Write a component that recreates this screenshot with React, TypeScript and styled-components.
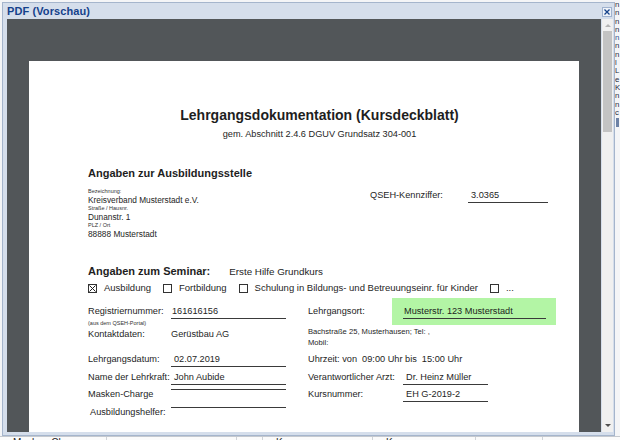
import React from 'react';
import styled, { createGlobalStyle } from 'styled-components';

const GlobalStyle = createGlobalStyle`
    html, body {
        margin: 0;
        padding: 0;
    }
    body {
        background: #f4f5f7;
        font-family: "Liberation Sans", Arial, sans-serif;
        color: #1e1e1e;
    }
`;

const Screen = styled.div`
    position: relative;
    width: 620px;
    height: 440px;
    overflow: hidden;
    background: #f4f5f7;
`;

/* the application that lies behind the dialog */
const Backdrop = styled.div`
    display: grid;
    grid-template-columns: 615px 1fr;
    grid-template-rows: 436px 1fr;
    height: 100%;
`;

const SideList = styled.div`
    grid-column: 2;
    grid-row: 1;
    padding-top: 1px;
    font-size: 7.8px;
    line-height: 8.3px;
    color: #1f2a3a;
    white-space: nowrap;
    overflow: hidden;
    div:nth-child(5) {
        color: #2c4f86;
    }
`;

const SideBar = styled.div`
    width: 3px;
    height: 9px;
    margin: 1px 0 0 1px;
    background: #6d82a6;
`;

const BottomRow = styled.div`
    grid-column: 1 / 3;
    grid-row: 2;
    display: flex;
    background: #fbfbfb;
    border-top: 1px solid #c5c9cf;
`;

const BottomCell = styled.div<{ $w: number }>`
    width: ${(p) => p.$w}px;
    flex: none;
    border-right: 1px solid #cfd3d8;
    padding: 1px 0 0 13px;
    box-sizing: border-box;
    font-size: 10px;
    line-height: 10px;
    white-space: nowrap;
`;

/* dialog window */
const Window = styled.section`
    position: absolute;
    left: 2px;
    top: 2px;
    width: 613px;
    height: 434px;
    box-sizing: border-box;
    display: flex;
    flex-direction: column;
    background: #d5deeb;
    border: 1px solid #a5b5cc;
    padding: 0 1px 3px 4px;
`;

const TitleBar = styled.header`
    height: 16px;
    flex: none;
    display: flex;
    align-items: center;
    justify-content: space-between;
`;

const Title = styled.h1`
    margin: 0;
    font-size: 11px;
    font-weight: bold;
    color: #15428b;
    letter-spacing: 0.1px;
`;

const CloseButton = styled.button`
    width: 10px;
    height: 10px;
    padding: 0;
    margin: 2px 1px 0 0;
    border: 1px solid #9fb2cf;
    background: #eef2f8;
    display: flex;
    align-items: center;
    justify-content: center;
`;

const Body = styled.div`
    flex: 1;
    display: flex;
    min-height: 0;
`;

const Viewer = styled.div`
    flex: 1;
    background: #525659;
    overflow: hidden;
    padding: 42px 22px 0;
`;

const ScrollTrack = styled.div`
    width: 11px;
    flex: none;
    margin-left: 1px;
    background: #f0f0f0;
    display: flex;
    flex-direction: column;
    align-items: center;
    padding: 5px 0;
    box-sizing: border-box;
`;

const ScrollArrow = styled.div<{ $down?: boolean }>`
    width: 0;
    height: 0;
    border-left: 3px solid transparent;
    border-right: 3px solid transparent;
    ${(p) => (p.$down ? 'border-top: 3px solid #505050; margin-top: auto;' : 'border-bottom: 3px solid #b4b4b4;')}
`;

const ScrollThumb = styled.div`
    width: 9px;
    height: 101px;
    margin-top: 4px;
    background: #c3c3c3;
`;

/* pdf page */
const Page = styled.article`
    background: #ffffff;
    min-height: 420px;
    padding: 46px 28px 0 59px;
    font-size: 9.2px;
    line-height: 12px;
    color: #1e1e1e;
`;

const DocTitle = styled.h2`
    margin: 0;
    text-align: center;
    font-size: 14px;
    line-height: 16px;
    font-weight: bold;
`;

const DocSubtitle = styled.p`
    margin: 5px 0 0;
    text-align: center;
    font-size: 9.2px;
    line-height: 12px;
`;

const SectionHeading = styled.h3<{ $mt: number }>`
    margin: ${(p) => p.$mt}px 0 0;
    font-size: 11px;
    line-height: 14px;
    font-weight: bold;
    display: flex;
    align-items: baseline;
    gap: 19px;
    span {
        font-weight: normal;
        font-size: 9.8px;
    }
`;

const StelleBlock = styled.div`
    display: flex;
    align-items: flex-start;
    margin-top: 8px;
`;

const AddressColumn = styled.div`
    width: 282px;
    display: flex;
    flex-direction: column;
`;

const TinyLabel = styled.div`
    font-size: 5.5px;
    line-height: 7px;
    color: #333;
`;

const AddressLine = styled.div`
    font-size: 8.3px;
    line-height: 10px;
`;

const KennRow = styled.div`
    display: flex;
    align-items: flex-start;
    margin-top: 1px;
    font-size: 9.2px;
`;

const CheckRow = styled.div`
    display: flex;
    align-items: center;
    margin-top: 3px;
    white-space: nowrap;
    font-size: 9.5px;
`;

const CheckItem = styled.label`
    display: flex;
    align-items: center;
    gap: 7px;
    margin-right: 12px;
`;

const Box = styled.span`
    width: 9px;
    height: 9px;
    box-sizing: border-box;
    border: 1px solid #333;
    display: inline-flex;
    align-items: center;
    justify-content: center;
`;

const FormRow = styled.div<{ $mt: number }>`
    display: flex;
    align-items: flex-start;
    margin-top: ${(p) => p.$mt}px;
    white-space: nowrap;
`;

const Label = styled.div<{ $w?: number; $indent?: number }>`
    width: ${(p) => p.$w ?? 83}px;
    flex: none;
    padding-left: ${(p) => p.$indent ?? 0}px;
    box-sizing: border-box;
`;

const RightLabel = styled(Label)`
    margin-left: 22px;
`;

const Value = styled.div<{ $w: number; $line?: boolean; $pad?: number }>`
    width: ${(p) => p.$w}px;
    flex: none;
    box-sizing: border-box;
    padding: 0 0 1px ${(p) => p.$pad ?? 3}px;
    border-bottom: 1px solid ${(p) => (p.$line ? '#3a3a3a' : 'transparent')};
`;

const Highlight = styled.div`
    background: #b3f5a5;
    margin: -7px -10px -6px -11px;
    padding: 7px 10px 6px 11px;
`;

const PortalNote = styled.div`
    font-size: 5.5px;
    line-height: 7px;
    color: #333;
    margin-top: 0.5px;
`;

const ContactText = styled.div`
    margin-left: 22px;
    font-size: 7.6px;
    line-height: 11px;
    margin-top: -1.5px;
`;

const TimeText = styled.div`
    margin-left: 22px;
`;

const CheckMark = () => (
    <svg width="7" height="7" viewBox="0 0 7 7">
        <path d="M0.5 0.5 L6.5 6.5 M6.5 0.5 L0.5 6.5" stroke="#222" strokeWidth="1" />
    </svg>
);

const sideLetters = ['n', 'n', 'n', 'n', 'n', 'n', 'n', 'l', 'L', 'e', 'K', 'n', 'n', 'c'];

const App: React.FC = () => {
    return (
        <Screen>
            <GlobalStyle />
            <Backdrop>
                <SideList>
                    {sideLetters.map((w, i) => (
                        <div key={i}>{w}</div>
                    ))}
                    <SideBar />
                </SideList>
                <BottomRow>
                    <BottomCell $w={107}>Masken-Charge</BottomCell>
                    <BottomCell $w={130} />
                    <BottomCell $w={26} />
                    <BottomCell $w={110}>Kursnummer</BottomCell>
                    <BottomCell $w={103}>Kurs</BottomCell>
                    <BottomCell $w={67} />
                </BottomRow>
            </Backdrop>

            <Window>
                <TitleBar>
                    <Title>PDF (Vorschau)</Title>
                    <CloseButton aria-label="Schließen">
                        <svg width="6" height="6" viewBox="0 0 6 6">
                            <path d="M0.5 0.5 L5.5 5.5 M5.5 0.5 L0.5 5.5" stroke="#15428b" strokeWidth="1.3" />
                        </svg>
                    </CloseButton>
                </TitleBar>
                <Body>
                    <Viewer>
                        <Page>
                            <DocTitle>Lehrgangsdokumentation (Kursdeckblatt)</DocTitle>
                            <DocSubtitle>gem. Abschnitt 2.4.6 DGUV Grundsatz 304-001</DocSubtitle>

                            <SectionHeading $mt={26}>Angaben zur Ausbildungsstelle</SectionHeading>
                            <StelleBlock>
                                <AddressColumn>
                                    <TinyLabel>Bezeichnung:</TinyLabel>
                                    <AddressLine>Kreisverband Musterstadt e.V.</AddressLine>
                                    <TinyLabel>Straße / Hausnr.</TinyLabel>
                                    <AddressLine>Dunanstr. 1</AddressLine>
                                    <TinyLabel>PLZ / Ort</TinyLabel>
                                    <AddressLine>88888 Musterstadt</AddressLine>
                                </AddressColumn>
                                <KennRow>
                                    <Label $w={98}>QSEH-Kennziffer:</Label>
                                    <Value $w={80} $line>
                                        3.0365
                                    </Value>
                                </KennRow>
                            </StelleBlock>

                            <SectionHeading $mt={25}>
                                Angaben zum Seminar:
                                <span>Erste Hilfe Grundkurs</span>
                            </SectionHeading>
                            <CheckRow>
                                <CheckItem>
                                    <Box>
                                        <CheckMark />
                                    </Box>
                                    Ausbildung
                                </CheckItem>
                                <CheckItem>
                                    <Box />
                                    Fortbildung
                                </CheckItem>
                                <CheckItem>
                                    <Box />
                                    Schulung in Bildungs- und Betreuungseinr. für Kinder
                                </CheckItem>
                                <CheckItem>
                                    <Box />
                                    ...
                                </CheckItem>
                            </CheckRow>

                            <FormRow $mt={11}>
                                <Label>Registriernummer:</Label>
                                <Value $w={115} $line $pad={1}>
                                    161616156
                                </Value>
                                <RightLabel $w={95}>Lehrgangsort:</RightLabel>
                                <Highlight>
                                    <Value $w={143} $line $pad={1}>
                                        Musterstr. 123 Musterstadt
                                    </Value>
                                </Highlight>
                            </FormRow>
                            <PortalNote>(aus dem QSEH-Portal)</PortalNote>

                            <FormRow $mt={1}>
                                <Label>Kontaktdaten:</Label>
                                <Value $w={115} $pad={0}>
                                    Gerüstbau AG
                                </Value>
                                <ContactText>
                                    Bachstraße 25, Musterhausen; Tel: ,
                                    <br />
                                    Mobil:
                                </ContactText>
                            </FormRow>

                            <FormRow $mt={5}>
                                <Label>Lehrgangsdatum:</Label>
                                <Value $w={115} $line>
                                    02.07.2019
                                </Value>
                                <TimeText>Uhrzeit: von &nbsp;09:00 Uhr bis &nbsp;15:00 Uhr</TimeText>
                            </FormRow>

                            <FormRow $mt={3.5}>
                                <Label>Name der Lehrkraft:</Label>
                                <Value $w={115} $line>
                                    John Aubide
                                </Value>
                                <RightLabel $w={95}>Verantwortlicher Arzt:</RightLabel>
                                <Value $w={85} $line>
                                    Dr. Heinz Müller
                                </Value>
                            </FormRow>

                            <FormRow $mt={3.5}>
                                <Label>Masken-Charge</Label>
                                <Value $w={115} $line />
                                <RightLabel $w={95}>Kursnummer:</RightLabel>
                                <Value $w={85} $line>
                                    EH G-2019-2
                                </Value>
                            </FormRow>

                            <FormRow $mt={3.5}>
                                <Label $indent={2}>Ausbildungshelfer:</Label>
                                <Value $w={115} $line />
                            </FormRow>
                        </Page>
                    </Viewer>
                    <ScrollTrack>
                        <ScrollArrow />
                        <ScrollThumb />
                        <ScrollArrow $down />
                    </ScrollTrack>
                </Body>
            </Window>
        </Screen>
    );
};

export default App;
